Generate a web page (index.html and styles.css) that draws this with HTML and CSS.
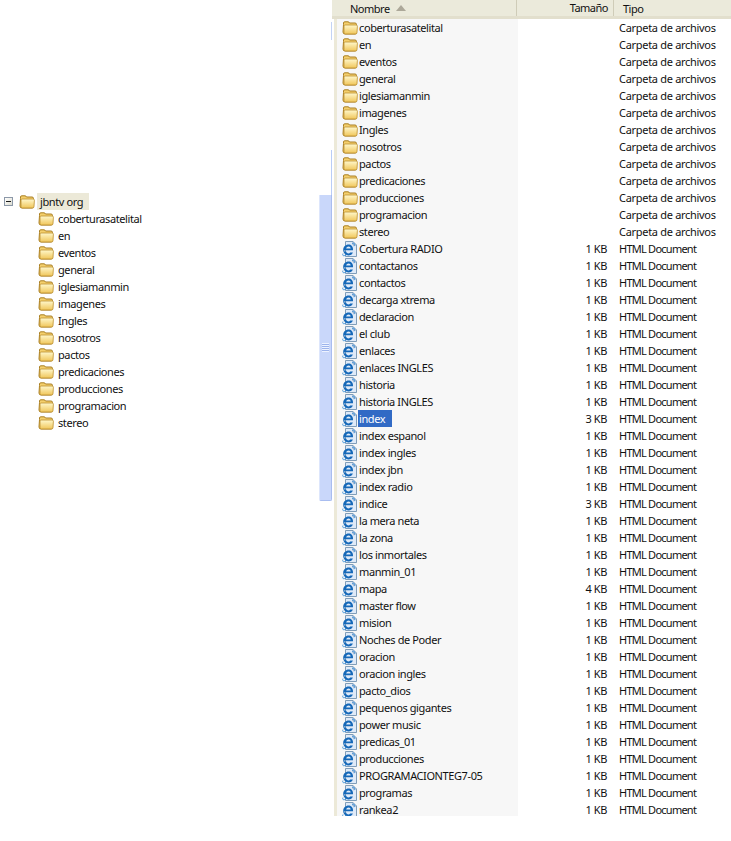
FILE: index.html
```html
<!DOCTYPE html>
<html lang="en">
  <head>
    <meta charset="UTF-8" />
    <meta name="viewport" content="width=device-width, initial-scale=1.0" />
    <title>jbntv org</title>
    <link rel="stylesheet" href="styles.css">
  </head>
  <body>
    <svg class="defs" width="0" height="0">
      <defs>
        <linearGradient id="folderFill" x1="0" y1="0" x2="0" y2="1">
          <stop offset="0" stop-color="#fff8cc" />
          <stop offset="1" stop-color="#f0c65a" />
        </linearGradient>
        <symbol id="folder" viewBox="0 0 16 14">
          <path d="M1.5 3.5 L1.5 2 Q1.5 .8 2.8 .8 L6 .8 Q7 .8 7.5 2 L13 2 Q14.5 2 14.5 3.5 L14.5 11.5 Q14.5 13 13 13 L3 13 Q1 13 1 11 Z" fill="#f4cf6c" stroke="#a97f24" stroke-width="1" />
          <path d="M2 5 Q2 4 3 4 L14.2 4 Q15.4 4 15.4 5.2 L15 11.6 Q15 13 13.4 13 L3.4 13 Q2 13 2 11.6 Z" fill="url(#folderFill)" stroke="#bd9030" stroke-width=".8" />
        </symbol>
        <symbol id="iedoc" viewBox="0 0 16 16">
          <path d="M3.5 .5 L11 .5 L14.5 4 L14.5 15.5 L3.5 15.5 Z" fill="#dfeaf8" stroke="#7f9db9" />
          <path d="M11 .5 L11 4 L14.5 4" fill="#c2d5ec" stroke="#7f9db9" stroke-width=".8" />
          <path d="M2.4 9.2 L11 9.2 C11.4 5.6 9 3.6 6.6 3.6 C3.6 3.6 1.2 6 1.2 9 C1.2 12 3.6 14.4 6.6 14.4 C8.6 14.4 10.2 13.4 10.9 11.5 L8.2 11.5 C7.8 12.2 7.2 12.5 6.5 12.5 C5.2 12.5 4.2 11.6 4.1 10.6 L2.4 10.6 Z M4.2 7.6 C4.4 6.4 5.4 5.5 6.6 5.5 C7.8 5.5 8.6 6.4 8.7 7.6 Z" fill="#1568b8" fill-rule="evenodd" />
          <path d="M1 12.5 C0 14.8 1.6 15.4 4.4 13.8 M10 2.6 C12.6 1.4 13.4 2.6 12 5.2" fill="none" stroke="#3a8fd8" stroke-width=".9" />
        </symbol>
      </defs>
    </svg>

    <div class="tree-pane">
      <div class="tree-root">
        <span class="expander"></span>
        <svg class="folder-icon"><use href="#folder" /></svg>
        <span class="root-label">jbntv org</span>
      </div>
      <ul class="tree-list">
        <li><svg class="folder-icon"><use href="#folder" /></svg>coberturasatelital</li>
        <li><svg class="folder-icon"><use href="#folder" /></svg>en</li>
        <li><svg class="folder-icon"><use href="#folder" /></svg>eventos</li>
        <li><svg class="folder-icon"><use href="#folder" /></svg>general</li>
        <li><svg class="folder-icon"><use href="#folder" /></svg>iglesiamanmin</li>
        <li><svg class="folder-icon"><use href="#folder" /></svg>imagenes</li>
        <li><svg class="folder-icon"><use href="#folder" /></svg>Ingles</li>
        <li><svg class="folder-icon"><use href="#folder" /></svg>nosotros</li>
        <li><svg class="folder-icon"><use href="#folder" /></svg>pactos</li>
        <li><svg class="folder-icon"><use href="#folder" /></svg>predicaciones</li>
        <li><svg class="folder-icon"><use href="#folder" /></svg>producciones</li>
        <li><svg class="folder-icon"><use href="#folder" /></svg>programacion</li>
        <li><svg class="folder-icon"><use href="#folder" /></svg>stereo</li>
      </ul>
    </div>

    <div class="scrollbar">
      <div class="sb-top"></div>
      <div class="sb-line"></div>
      <div class="sb-thumb"><span class="sb-grip"></span></div>
    </div>

    <div class="list-pane">
      <div class="list-header">
        <div class="col-name">Nombre <span class="sort-arrow"></span></div>
        <div class="col-size">Tamaño</div>
        <div class="col-type">Tipo</div>
      </div>
      <div class="list-body">
        <div class="row"><div class="name"><svg class="folder-icon"><use href="#folder" /></svg><span>coberturasatelital</span></div><div class="size"></div><div class="type dir">Carpeta de archivos</div></div>
        <div class="row"><div class="name"><svg class="folder-icon"><use href="#folder" /></svg><span>en</span></div><div class="size"></div><div class="type dir">Carpeta de archivos</div></div>
        <div class="row"><div class="name"><svg class="folder-icon"><use href="#folder" /></svg><span>eventos</span></div><div class="size"></div><div class="type dir">Carpeta de archivos</div></div>
        <div class="row"><div class="name"><svg class="folder-icon"><use href="#folder" /></svg><span>general</span></div><div class="size"></div><div class="type dir">Carpeta de archivos</div></div>
        <div class="row"><div class="name"><svg class="folder-icon"><use href="#folder" /></svg><span>iglesiamanmin</span></div><div class="size"></div><div class="type dir">Carpeta de archivos</div></div>
        <div class="row"><div class="name"><svg class="folder-icon"><use href="#folder" /></svg><span>imagenes</span></div><div class="size"></div><div class="type dir">Carpeta de archivos</div></div>
        <div class="row"><div class="name"><svg class="folder-icon"><use href="#folder" /></svg><span>Ingles</span></div><div class="size"></div><div class="type dir">Carpeta de archivos</div></div>
        <div class="row"><div class="name"><svg class="folder-icon"><use href="#folder" /></svg><span>nosotros</span></div><div class="size"></div><div class="type dir">Carpeta de archivos</div></div>
        <div class="row"><div class="name"><svg class="folder-icon"><use href="#folder" /></svg><span>pactos</span></div><div class="size"></div><div class="type dir">Carpeta de archivos</div></div>
        <div class="row"><div class="name"><svg class="folder-icon"><use href="#folder" /></svg><span>predicaciones</span></div><div class="size"></div><div class="type dir">Carpeta de archivos</div></div>
        <div class="row"><div class="name"><svg class="folder-icon"><use href="#folder" /></svg><span>producciones</span></div><div class="size"></div><div class="type dir">Carpeta de archivos</div></div>
        <div class="row"><div class="name"><svg class="folder-icon"><use href="#folder" /></svg><span>programacion</span></div><div class="size"></div><div class="type dir">Carpeta de archivos</div></div>
        <div class="row"><div class="name"><svg class="folder-icon"><use href="#folder" /></svg><span>stereo</span></div><div class="size"></div><div class="type dir">Carpeta de archivos</div></div>
        <div class="row"><div class="name"><svg class="ie-icon"><use href="#iedoc" /></svg><span>Cobertura RADIO</span></div><div class="size">1 KB</div><div class="type">HTML Document</div></div>
        <div class="row"><div class="name"><svg class="ie-icon"><use href="#iedoc" /></svg><span>contactanos</span></div><div class="size">1 KB</div><div class="type">HTML Document</div></div>
        <div class="row"><div class="name"><svg class="ie-icon"><use href="#iedoc" /></svg><span>contactos</span></div><div class="size">1 KB</div><div class="type">HTML Document</div></div>
        <div class="row"><div class="name"><svg class="ie-icon"><use href="#iedoc" /></svg><span>decarga xtrema</span></div><div class="size">1 KB</div><div class="type">HTML Document</div></div>
        <div class="row"><div class="name"><svg class="ie-icon"><use href="#iedoc" /></svg><span>declaracion</span></div><div class="size">1 KB</div><div class="type">HTML Document</div></div>
        <div class="row"><div class="name"><svg class="ie-icon"><use href="#iedoc" /></svg><span>el club</span></div><div class="size">1 KB</div><div class="type">HTML Document</div></div>
        <div class="row"><div class="name"><svg class="ie-icon"><use href="#iedoc" /></svg><span>enlaces</span></div><div class="size">1 KB</div><div class="type">HTML Document</div></div>
        <div class="row"><div class="name"><svg class="ie-icon"><use href="#iedoc" /></svg><span>enlaces INGLES</span></div><div class="size">1 KB</div><div class="type">HTML Document</div></div>
        <div class="row"><div class="name"><svg class="ie-icon"><use href="#iedoc" /></svg><span>historia</span></div><div class="size">1 KB</div><div class="type">HTML Document</div></div>
        <div class="row"><div class="name"><svg class="ie-icon"><use href="#iedoc" /></svg><span>historia INGLES</span></div><div class="size">1 KB</div><div class="type">HTML Document</div></div>
        <div class="row"><div class="name"><svg class="ie-icon"><use href="#iedoc" /></svg><span class="selected">index</span></div><div class="size">3 KB</div><div class="type">HTML Document</div></div>
        <div class="row"><div class="name"><svg class="ie-icon"><use href="#iedoc" /></svg><span>index espanol</span></div><div class="size">1 KB</div><div class="type">HTML Document</div></div>
        <div class="row"><div class="name"><svg class="ie-icon"><use href="#iedoc" /></svg><span>index ingles</span></div><div class="size">1 KB</div><div class="type">HTML Document</div></div>
        <div class="row"><div class="name"><svg class="ie-icon"><use href="#iedoc" /></svg><span>index jbn</span></div><div class="size">1 KB</div><div class="type">HTML Document</div></div>
        <div class="row"><div class="name"><svg class="ie-icon"><use href="#iedoc" /></svg><span>index radio</span></div><div class="size">1 KB</div><div class="type">HTML Document</div></div>
        <div class="row"><div class="name"><svg class="ie-icon"><use href="#iedoc" /></svg><span>indice</span></div><div class="size">3 KB</div><div class="type">HTML Document</div></div>
        <div class="row"><div class="name"><svg class="ie-icon"><use href="#iedoc" /></svg><span>la mera neta</span></div><div class="size">1 KB</div><div class="type">HTML Document</div></div>
        <div class="row"><div class="name"><svg class="ie-icon"><use href="#iedoc" /></svg><span>la zona</span></div><div class="size">1 KB</div><div class="type">HTML Document</div></div>
        <div class="row"><div class="name"><svg class="ie-icon"><use href="#iedoc" /></svg><span>los inmortales</span></div><div class="size">1 KB</div><div class="type">HTML Document</div></div>
        <div class="row"><div class="name"><svg class="ie-icon"><use href="#iedoc" /></svg><span>manmin_01</span></div><div class="size">1 KB</div><div class="type">HTML Document</div></div>
        <div class="row"><div class="name"><svg class="ie-icon"><use href="#iedoc" /></svg><span>mapa</span></div><div class="size">4 KB</div><div class="type">HTML Document</div></div>
        <div class="row"><div class="name"><svg class="ie-icon"><use href="#iedoc" /></svg><span>master flow</span></div><div class="size">1 KB</div><div class="type">HTML Document</div></div>
        <div class="row"><div class="name"><svg class="ie-icon"><use href="#iedoc" /></svg><span>mision</span></div><div class="size">1 KB</div><div class="type">HTML Document</div></div>
        <div class="row"><div class="name"><svg class="ie-icon"><use href="#iedoc" /></svg><span>Noches de Poder</span></div><div class="size">1 KB</div><div class="type">HTML Document</div></div>
        <div class="row"><div class="name"><svg class="ie-icon"><use href="#iedoc" /></svg><span>oracion</span></div><div class="size">1 KB</div><div class="type">HTML Document</div></div>
        <div class="row"><div class="name"><svg class="ie-icon"><use href="#iedoc" /></svg><span>oracion ingles</span></div><div class="size">1 KB</div><div class="type">HTML Document</div></div>
        <div class="row"><div class="name"><svg class="ie-icon"><use href="#iedoc" /></svg><span>pacto_dios</span></div><div class="size">1 KB</div><div class="type">HTML Document</div></div>
        <div class="row"><div class="name"><svg class="ie-icon"><use href="#iedoc" /></svg><span>pequenos gigantes</span></div><div class="size">1 KB</div><div class="type">HTML Document</div></div>
        <div class="row"><div class="name"><svg class="ie-icon"><use href="#iedoc" /></svg><span>power music</span></div><div class="size">1 KB</div><div class="type">HTML Document</div></div>
        <div class="row"><div class="name"><svg class="ie-icon"><use href="#iedoc" /></svg><span>predicas_01</span></div><div class="size">1 KB</div><div class="type">HTML Document</div></div>
        <div class="row"><div class="name"><svg class="ie-icon"><use href="#iedoc" /></svg><span>producciones</span></div><div class="size">1 KB</div><div class="type">HTML Document</div></div>
        <div class="row"><div class="name"><svg class="ie-icon"><use href="#iedoc" /></svg><span>PROGRAMACIONTEG7-05</span></div><div class="size">1 KB</div><div class="type">HTML Document</div></div>
        <div class="row"><div class="name"><svg class="ie-icon"><use href="#iedoc" /></svg><span>programas</span></div><div class="size">1 KB</div><div class="type">HTML Document</div></div>
        <div class="row"><div class="name"><svg class="ie-icon"><use href="#iedoc" /></svg><span>rankea2</span></div><div class="size">1 KB</div><div class="type">HTML Document</div></div>
      </div>
    </div>
  </body>
</html>
```

FILE: styles.css
```css
* {
  margin: 0;
  padding: 0;
  box-sizing: border-box;
}

body {
  display: flex;
  align-items: flex-start;
  height: 841px;
  overflow: hidden;
  background: #ffffff;
  color: #111111;
  font-family: "Noto Sans", sans-serif;
  font-size: 11px;
  letter-spacing: -0.4px;
}

.defs {
  position: absolute;
}

/* Left folder tree */
.tree-pane {
  width: 319px;
  flex-shrink: 0;
  padding: 193px 0 0 4px;
}

.tree-root {
  display: flex;
  align-items: center;
  height: 17px;
}

.expander {
  position: relative;
  width: 9px;
  height: 9px;
  margin-right: 6px;
  border: 1px solid #8c98a8;
  background: linear-gradient(135deg, #ffffff, #dcdcd0);
}

.expander::after {
  content: "";
  position: absolute;
  left: 1px;
  top: 3px;
  width: 5px;
  height: 1px;
  background: #1a1a1a;
}

.folder-icon {
  width: 16px;
  height: 14px;
  flex-shrink: 0;
}

.root-label {
  width: 52px;
  height: 17px;
  line-height: 17px;
  margin-left: 2px;
  padding-left: 3px;
  background: #ece9d8;
}

.tree-list {
  list-style: none;
  padding-left: 34px;
}

.tree-list li {
  display: flex;
  align-items: center;
  gap: 4px;
  height: 17px;
}

/* Scrollbar strip between the panes */
.scrollbar {
  width: 13px;
  flex-shrink: 0;
}

.sb-top {
  height: 18px;
  margin-top: 22px;
  border-right: 1px solid #c3d3f5;
}

.sb-line {
  height: 45px;
  margin-top: 110px;
  border-right: 1px solid #b9cdf7;
}

.sb-thumb {
  display: flex;
  align-items: center;
  justify-content: center;
  height: 306px;
  background: #c9d7fa;
  border-left: 1px solid #dde6fc;
  border-right: 1px solid #a9bdf0;
  border-bottom: 1px solid #a9bdf0;
  border-radius: 0 0 2px 2px;
}

.sb-grip {
  width: 7px;
  height: 9px;
  background: repeating-linear-gradient(#eef3ff 0 1px, #9db4ec 1px 2px);
}

/* Right file list */
.list-pane {
  flex: 1;
  height: 816px;
  overflow: hidden;
}

.list-header {
  display: flex;
  align-items: center;
  height: 19px;
  background: #ebeadb;
  border-bottom: 3px solid #e2dfcd;
  letter-spacing: -0.5px;
}

.col-name {
  display: flex;
  align-items: center;
  width: 185px;
  height: 16px;
  padding-left: 18px;
  border-right: 1px solid #cfccb8;
}

.sort-arrow {
  width: 0;
  height: 0;
  margin-left: 6px;
  border-left: 5px solid transparent;
  border-right: 5px solid transparent;
  border-bottom: 6px solid #aca899;
}

.col-size {
  width: 97px;
  height: 16px;
  padding-right: 5px;
  text-align: right;
  border-right: 1px solid #cfccb8;
}

.col-type {
  padding-left: 9px;
}

.list-body {
  margin-left: 2px;
  border-left: 3px solid #ece9d8;
}

.row {
  display: grid;
  grid-template-columns: 181px 89px 1fr;
  height: 17px;
  line-height: 17px;
}

.name {
  display: flex;
  align-items: center;
  padding-left: 5px;
  background: #f7f7f7;
}

.name span {
  padding-left: 1px;
}

.selected {
  width: 34px;
  background: #316ac5;
  color: #ffffff;
}

.ie-icon {
  width: 16px;
  height: 16px;
  flex-shrink: 0;
}

.size {
  text-align: right;
}

.type {
  padding-left: 12px;
  letter-spacing: -0.75px;
}

.type.dir {
  letter-spacing: -0.3px;
}
```
